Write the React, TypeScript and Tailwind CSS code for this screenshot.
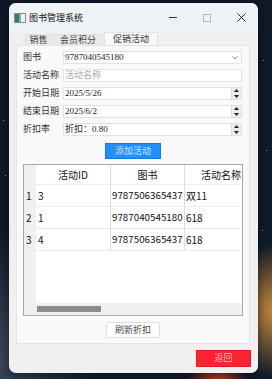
import React from 'react';

const rows = [
  { n: 1, id: '3', book: '9787506365437', name: '双11' },
  { n: 2, id: '1', book: '9787040545180', name: '618' },
  { n: 3, id: '4', book: '9787506365437', name: '618' },
];

const serif = { fontFamily: '"Liberation Serif", "Noto Sans CJK SC", serif' };
const sans = { fontFamily: '"Noto Sans CJK SC", "Liberation Sans", sans-serif' };

function SpinArrows() {
  return (
    <div className="w-[10px] h-full flex flex-col bg-[#ececec] border-l border-[#dcdcdc]">
      <div className="flex-1 flex items-center justify-center">
        <svg width="5" height="3" viewBox="0 0 5 3"><path d="M0 3 L2.5 0 L5 3 Z" fill="#222" /></svg>
      </div>
      <div className="flex-1 flex items-center justify-center">
        <svg width="5" height="3" viewBox="0 0 5 3"><path d="M0 0 L2.5 3 L5 0 Z" fill="#222" /></svg>
      </div>
    </div>
  );
}

function FormRow({ label, children }: { label: string; children: React.ReactNode }) {
  return (
    <div className="flex items-center h-[13px]">
      <span className="w-[40px] text-[9px] leading-none text-[#333]" style={serif}>{label}</span>
      <div className="w-[179px] h-full bg-white border border-[#e2e2e2] flex items-center text-[9px] leading-none text-[#222]" style={serif}>
        {children}
      </div>
    </div>
  );
}

export default function App() {
  return (
    <div className="relative w-[272px] h-[379px] overflow-hidden pl-[9px] pt-[3px] bg-[radial-gradient(circle_at_102%_82%,#c88a3c_0,transparent_16%),radial-gradient(ellipse_at_80%_102%,#c2401c_0,transparent_10%),radial-gradient(ellipse_at_0%_95%,#3a4656_0,transparent_25%),linear-gradient(#0e1826,#111c2b)]">
      {/* stars */}
      <div className="absolute left-[3px] top-[120px] w-[1px] h-[1px] bg-[#8aa0c0]" />
      <div className="absolute left-[5px] top-[175px] w-[1px] h-[1px] bg-[#8aa0c0]" />
      <div className="absolute left-[263px] top-[60px] w-[1px] h-[1px] bg-[#8aa0c0]" />
      <div className="absolute left-[266px] top-[150px] w-[1px] h-[1px] bg-[#8aa0c0]" />
      <div className="absolute left-[262px] top-[230px] w-[1px] h-[1px] bg-[#8aa0c0]" />

      <div className="relative w-[249px] h-[370px] rounded-[7px] bg-[#f0f0f0] flex flex-col overflow-hidden shadow-[0_2px_8px_rgba(0,0,0,0.5)]">
        {/* title bar */}
        <div className="h-[29px] bg-[#eef1f6] flex items-center pl-[5px]">
          <svg width="12" height="10" viewBox="0 0 12 10">
            <rect x="0.5" y="0.5" width="11" height="9" fill="#f4f4f4" stroke="#8a8a8a" />
            <rect x="1" y="1" width="4" height="8" fill="#2f7d6d" />
            <rect x="5" y="1" width="2" height="8" fill="#6fb3a3" />
          </svg>
          <span className="ml-[3px] text-[9px] leading-none text-[#111]" style={sans}>图书管理系统</span>
          <div className="ml-auto flex items-center">
            <div className="w-[34px] flex justify-center">
              <div className="w-[8px] h-[1px] bg-[#333]" />
            </div>
            <div className="w-[34px] flex justify-center">
              <div className="w-[8px] h-[8px] border border-[#b8b8b8]" />
            </div>
            <div className="w-[34px] flex justify-center">
              <svg width="9" height="9" viewBox="0 0 9 9">
                <path d="M0.5 0.5 L8.5 8.5 M8.5 0.5 L0.5 8.5" stroke="#222" strokeWidth="1" />
              </svg>
            </div>
          </div>
        </div>

        {/* body */}
        <div className="flex-1 flex flex-col pl-[7px] pr-[8px]">
          {/* tabs */}
          <div className="flex items-end h-[13px] ml-[9px] text-[9px] leading-none" style={serif}>
            <div className="w-[26px] h-[11px] bg-[#e9e9e9] border-t border-l border-[#e0e0e0] flex items-center justify-center text-[#444]">销售</div>
            <div className="w-[53px] h-[11px] bg-[#e9e9e9] border-t border-l border-[#e0e0e0] flex items-center justify-center text-[#444]">会员积分</div>
            <div className="w-[54px] h-[13px] bg-[#f9f9f9] border-t border-l border-r border-[#e2e2e2] flex items-center justify-center text-[#333]">促销活动</div>
          </div>

          {/* panel */}
          <div className="h-[299px] bg-[#f9f9f9] border border-[#e4e4e4] flex flex-col pt-[5px] pl-[6px]">
            <div className="flex flex-col gap-[5px]">
              <FormRow label="图书">
                <span className="pl-[1px]">9787040545180</span>
                <svg className="ml-auto mr-[3px]" width="6" height="4" viewBox="0 0 6 4">
                  <path d="M0.5 0.5 L3 3 L5.5 0.5" stroke="#888" fill="none" />
                </svg>
              </FormRow>
              <FormRow label="活动名称">
                <span className="pl-[1px] text-[#aaa]">活动名称</span>
              </FormRow>
              <FormRow label="开始日期">
                <span className="pl-[1px]">2025/5/26</span>
                <div className="ml-auto h-full"><SpinArrows /></div>
              </FormRow>
              <FormRow label="结束日期">
                <span className="pl-[1px]">2025/6/2</span>
                <div className="ml-auto h-full"><SpinArrows /></div>
              </FormRow>
              <FormRow label="折扣率">
                <span className="pl-[1px]">折扣：0.80</span>
                <div className="ml-auto h-full"><SpinArrows /></div>
              </FormRow>
            </div>

            <div className="flex justify-center pr-[6px] mt-[7px]">
              <div className="w-[56px] h-[16px] bg-[#1e90ff] border border-[#1a78d8] flex items-center justify-center text-[9px] leading-none text-[#cfe6ff]" style={serif}>添加活动</div>
            </div>

            {/* table */}
            <div className="mt-[5px] w-[220px] h-[152px] border border-[#a8a8a8] bg-white flex flex-col text-[10px] leading-none text-[#111]" style={sans}>
              <div className="flex-1 flex">
                <div className="w-[12px] bg-[#f0f0f0] flex flex-col">
                  <div className="h-[20px]" />
                  {rows.map(r => (
                    <div key={r.n} className="h-[22px] flex items-center pl-[2px]">{r.n}</div>
                  ))}
                </div>
                <div className="flex-1 flex flex-col overflow-hidden">
                  <div className="h-[20px] flex border-b border-[#ececec]">
                    <div className="w-[75px] border-r border-[#dcdcdc] flex items-center justify-center">活动ID</div>
                    <div className="w-[74px] border-r border-[#dcdcdc] flex items-center justify-center">图书</div>
                    <div className="flex-1 flex items-center justify-end pr-[1px] whitespace-nowrap">活动名称</div>
                  </div>
                  {rows.map(r => (
                    <div key={r.n} className="h-[22px] flex border-b border-[#ececec]">
                      <div className="w-[75px] border-r border-[#dcdcdc] flex items-center pl-[2px]">{r.id}</div>
                      <div className="w-[74px] border-r border-[#dcdcdc] flex items-center pl-[1px] text-[9.8px]">{r.book}</div>
                      <div className="flex-1 flex items-center pl-[1px]">{r.name}</div>
                    </div>
                  ))}
                </div>
              </div>
              <div className="h-[12px] bg-[#f0f0f0] flex items-center pl-[13px]">
                <div className="w-[64px] h-[6px] bg-[#8c8c8c]" />
              </div>
            </div>

            <div className="flex justify-center pr-[6px] mt-[6px]">
              <div className="w-[54px] h-[16px] bg-white border border-[#dedede] rounded-[2px] flex items-center justify-center text-[9px] leading-none text-[#444]" style={serif}>刷新折扣</div>
            </div>
          </div>

          <div className="flex justify-end mt-[6px] mr-[-1px]">
            <div className="w-[55px] h-[17px] bg-[#fb2232] border border-[#e01a28] flex items-center justify-center text-[9px] leading-none text-[#f8b4bc]" style={serif}>返回</div>
          </div>
        </div>
      </div>
    </div>
  );
}
